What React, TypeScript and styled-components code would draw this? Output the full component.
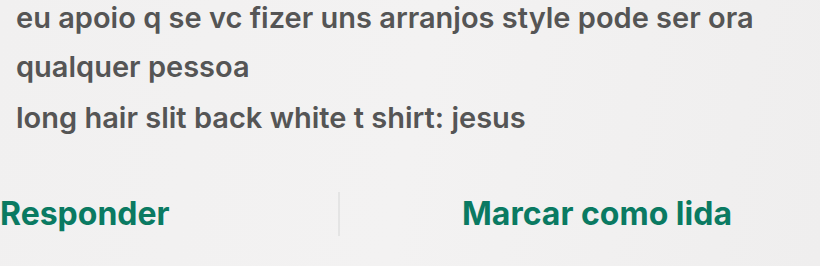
import React from "react";
import styled, { createGlobalStyle } from "styled-components";

const Global = createGlobalStyle`
  html, body { margin: 0; padding: 0; }
  body {
    width: 820px;
    height: 266px;
    overflow: hidden;
    background: linear-gradient(100deg, #f1f0f0 0%, #f3f2f2 50%, #efeeee 100%);
    font-family: Inter, "Noto Sans", sans-serif;
  }
`;

const Card = styled.div`
  width: 820px;
  height: 266px;
  display: flex;
  flex-direction: column;
  box-sizing: border-box;
`;

const Body = styled.div`
  margin-top: -7px;
  padding: 0 0 0 16px;
  display: flex;
  flex-direction: column;
`;

const Paragraph = styled.p<{ $top?: number }>`
  margin: ${(p) => p.$top ?? 0}px 0 0 0;
  font-size: 29px;
  font-weight: 600;
  line-height: 49px;
  color: #555555;
`;

const Actions = styled.div`
  margin-top: 50px;
  display: flex;
  align-items: center;
  height: 44px;
`;

const Action = styled.button<{ $align: "left" | "center"; $width?: number; $pad?: number }>`
  all: unset;
  box-sizing: border-box;
  ${(p) => (p.$width ? `width: ${p.$width}px;` : "flex: 1;")}
  padding-left: ${(p) => p.$pad ?? 0}px;
  text-align: ${(p) => p.$align};
  font-family: Inter, "Noto Sans", sans-serif;
  font-size: 32px;
  font-weight: 700;
  line-height: 44px;
  color: #0a7a62;
  cursor: pointer;
`;

const Divider = styled.div`
  width: 2px;
  height: 44px;
  background: #e4e4e4;
`;

export default function App() {
  return (
    <>
      <Global />
      <Card>
        <Body>
          <Paragraph>eu apoio q se vc fizer uns arranjos style pode ser ora qualquer pessoa</Paragraph>
          <Paragraph $top={2}>long hair slit back white t shirt: jesus</Paragraph>
        </Body>
        <Actions>
          <Action $align="left" $width={338}>Responder</Action>
          <Divider />
          <Action $align="center" $pad={34}>Marcar como lida</Action>
        </Actions>
      </Card>
    </>
  );
}
